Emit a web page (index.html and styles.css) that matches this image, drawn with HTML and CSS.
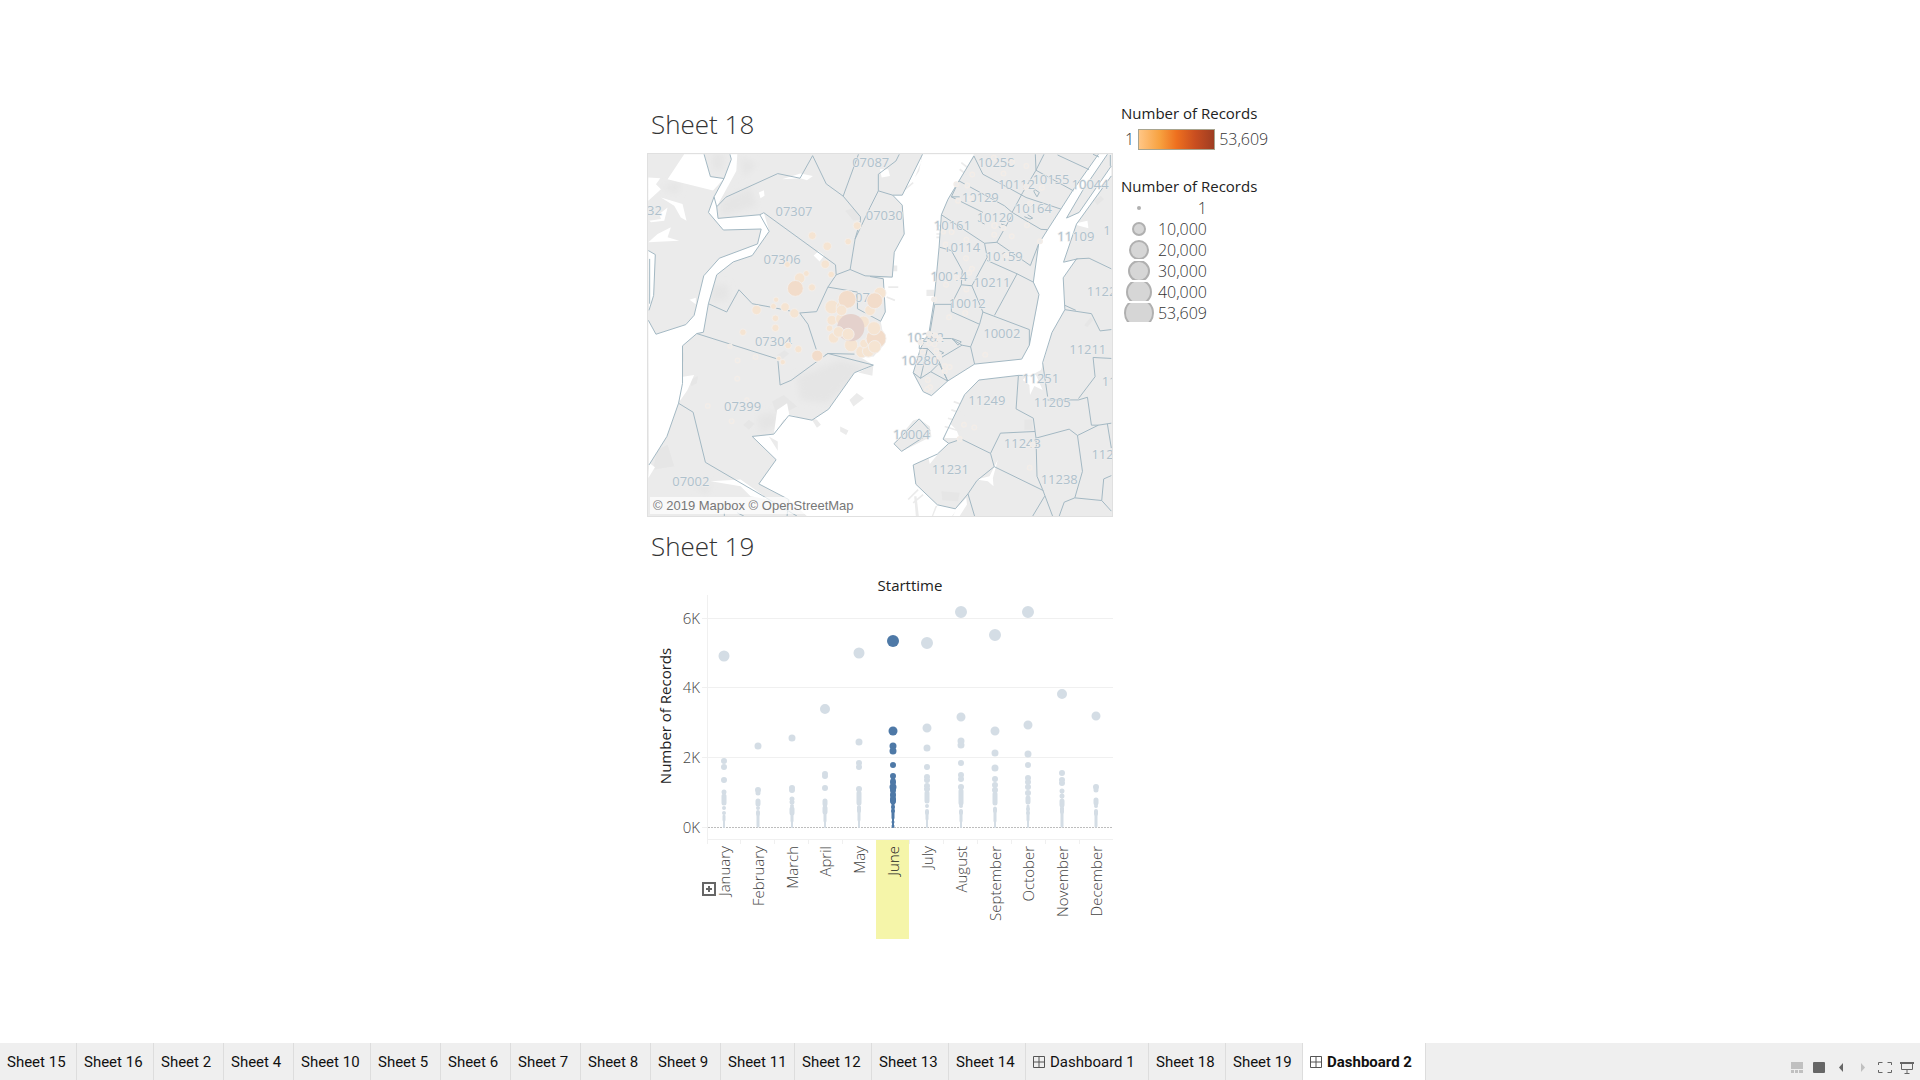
FILE: index.html
```html
<!DOCTYPE html>
<html lang="en">
<head>
<meta charset="utf-8">
<title>Dashboard 2</title>
<link rel="stylesheet" href="styles.css">
</head>
<body>
<main class="dashboard">
  <div class="sheets">
    <section>
      <h2 class="sheet-title">Sheet 18</h2>
      <div class="map">
        <svg class="map-canvas" viewBox="21 189 1398 1092" role="img" aria-label="Map of records by postal code">
          <defs>
            <filter id="soft" x="-20%" y="-20%" width="140%" height="140%"><feGaussianBlur stdDeviation="9"/></filter>
          </defs>
          <rect class="land" x="21" y="189" width="1398" height="1092"/>
          <!-- urban shading -->
          <g class="shade" filter="url(#soft)">
            <path d="M215 190L250 190 245 240 215 235ZM240 330L330 290 350 345 240 378ZM300 200L350 220 310 260ZM470 860L600 810 680 830 560 940 480 930ZM350 980L400 965 430 1000 360 1030ZM205 590L260 580 265 625 215 635ZM160 1190L210 1180 200 1215ZM60 290L120 270 110 310Z"/>
          </g>
          <g class="block">
            <path d="M145 870L172 858 168 880 152 888ZM118 792L128 788 128 815 118 812ZM50 1080L80 1065 100 1130 35 1140ZM308 1005L325 990 342 1002 325 1020ZM410 795L432 780 446 790 425 808ZM395 935L430 915 470 950 410 980ZM905 1205L960 1210 955 1235 908 1232ZM1335 705L1355 680 1362 690 1345 710ZM1155 990L1180 988 1180 1020 1155 1020ZM615 360L640 352 665 385 640 390ZM1365 330L1385 315 1395 325 1375 343Z"/>
          </g>
          <!-- rivers and harbour -->
          <path class="water" d="M22 690L45 732 135 703 160 675 189 556 236 503 351 460 362 415 248 418 203 365 220 318 250 263 272 205 268 190 290 190 287 240 228 348 232 383 358 372 370 366 386 422 335 495 278 514 228 553 203 640 188 726 168 730 125 767 125 880 113 940 78 1040 24 1126ZM130 190L190 190 209 257 250 263 217 299 80 265ZM22 480L43 492 38 615 24 660ZM126 860L160 855 140 900 116 935ZM25 1120L42 1133 22 1165Z"/>
          <path class="water" d="M848 190L787 313 758 313 787 343 793 430 763 485 757 560 730 562 736 665 722 693 735 760 700 800 643 790 700 825 643 848 565 958 515 991 445 977 400 1033 335 1040 407 1110 355 1183 445 1230 500 1280 937 1280 970 1235 947 1258 893 1246 828 1184 820 1126 893 1093 927 1061 910 1048 975 914 1018 870 1137 856 1175 856 1205 840 1212 818 1238 727 1277 658 1276 630 1272 562 1312 505 1273 515 1312 400 1417 255 1417 190 1378 190 1300 300 1265 355 1225 417 1198 460 1182 575 1199 612 1195 640 1170 765 1147 807 1005 822 924 873 875 917 850 905 820 848 842 775 868 725 883 630 898 470 905 372 925 325 958 270 1003 190Z"/>
          <path class="land" d="M1282 382L1330 300 1405 190 1417 190 1417 225 1320 365ZM762 1062L820 992 838 987 870 1010 875 1040 785 1085ZM628 930L650 909 672 925 640 950ZM600 1010L625 1022 618 1036 600 1025ZM512 985L530 990 542 1005 530 1014ZM700 825L697 857 655 847ZM860 598L883 598 883 617 860 617ZM825 260L845 210 838 190 848 190 838 240ZM760 525L772 525 772 542 760 542ZM823 1220L830 1220 837 1280 828 1280ZM887 1250L893 1248 880 1280 876 1280ZM385 1040L412 1055 412 1083Z"/>
          <!-- docks and rail yards -->
          <path class="water" d="M22 260L58 262 45 280 60 295 22 330ZM60 320L125 340 137 390 120 380 100 345ZM22 455L50 430 90 410 80 440 115 450ZM25 390L60 385 55 370 80 350 70 390 30 395ZM425 265L480 248 518 255 500 268 480 262ZM520 495L535 482 552 495 538 513ZM355 305L370 298 372 315 360 322ZM410 960L440 940 447 975 470 980 430 990 400 1033ZM210 1175L300 1170 385 1230 330 1220 300 1190ZM146 628L165 622 165 642ZM1160 860L1190 855 1210 900 1185 888 1172 915 1170 885 1150 870ZM1010 1170L1050 1160 1075 1110 1060 1165 1062 1190 1045 1175ZM950 1258L980 1225 982 1245 960 1280 940 1280ZM1345 390L1300 400 1348 413ZM865 1100L920 1062 870 1123ZM930 1000L950 1020 960 1045 915 1045ZM720 235L745 235 750 255 725 260Z"/>
          <path class="pier" d="M965 215L990 235M960 235L980 250M890 405h18M890 418h18M890 430h18M890 440h18M790 300l30 -25M745 590l30 0M740 620l25 10M835 1200l-30 30M850 1215l-30 25M915 1010l50 15M925 985l50 15M935 960l45 15M942 935l40 15"/>
          <!-- postal boundaries -->
          <path class="border" d="M190 190L209 257 250 263M268 190L272 205 250 263 220 318 203 365 248 418 362 415 351 460 236 503 189 556 160 675 135 703 45 732 22 690M220 318L228 348 232 383 358 372 386 422 335 495 278 514 228 553 203 640 188 726 168 730 125 767 125 880 113 940 78 1040 24 1126M22 480L43 492 38 615 24 660M26 505V640"/>
          <path class="border" d="M228 348L256 319 412 248 479 262 517 194 558 279 609 316 661 378V390L645 445 630 537 588 553 586 523 370 366 358 372M655 190L609 316M778 190L768 210 715 250V300L758 313H787L848 190M715 300L690 350 645 445M758 313L787 343 793 430 763 485 757 560 675 556 630 537M588 553L563 590 529 664 478 668M563 590L652 605 652 655 722 693 736 665 730 565 690 558M203 640L258 665 295 598 335 640 400 652 478 668 503 702 528 778M168 730L412 807 419 885 452 871 563 790 643 792M555 795L563 790 700 825 643 848 565 958 515 991 445 977 400 1033 335 1040 407 1110 355 1183 445 1230 440 1280M113 940L157 967 194 1118 365 1218 470 1280M251 1270V1280M290 1270L310 1280"/>
          <path class="border" d="M1003 195L958 270 925 325 905 372 898 470 883 630 868 725 842 775 820 848 850 905 875 917 924 873 1005 822 1147 807 1170 765 1199 612 1182 575 1198 460 1225 417 1265 355 1300 300 1378 190M1003 195L1030 250 1120 298 1160 320 1265 355M958 270L1095 345 1118 365 1205 416 1225 417M1118 365L1150 305 1190 238 1188 190M1190 238L1214 190M1190 238L1303 300M1255 192L1350 236M1362 190L1380 198M935 318L1030 365M958 270L935 318H960M1120 370L1072 455 1035 458 905 372M1072 455L1173 525 1198 460M1035 458L1043 500 997 586 965 583 935 642H885L870 730M900 470L935 480 968 540 965 583M1043 510L1133 550 1182 575M1133 550L1065 675M997 586L1030 665 1020 702 935 664V642M1030 665L1170 718 1170 765M1020 702L993 770 1005 822M993 770L967 765 895 808 924 873 873 845 842 865 820 848M967 765L935 745H840L838 775H863L895 808M842 865L863 775M873 845L898 820 924 873M938 745L955 765 965 755ZM1185 295L1200 305 1193 318 1184 303ZM1165 372L1180 382 1172 385 1155 378M1085 400L1100 405 1090 415 1078 408M1015 390L1035 400M895 780L912 788 905 792"/>
          <path class="border" d="M1137 856L1018 870 975 914 910 1048 927 1061 965 1048 1053 1091 1083 1030 1187 1025M1137 856L1130 957 1182 985 1190 1045 1290 1018 1315 1037 1378 1006 1417 1000M1137 856H1165M1315 1037L1330 1145 1307 1225 1388 1233 1417 1265M1388 1233L1394 1168 1417 1158M1307 1225L1275 1238 1260 1280M1405 1002L1417 1075M1225 930H1318L1345 922 1357 1006H1378M1318 926L1368 860 1362 802 1417 805M1225 920L1210 818 1238 727 1277 658 1357 670 1383 722 1417 718M1277 645L1310 660M1277 658L1272 562 1312 505 1350 503 1417 535M1273 515L1315 505M1273 515L1312 400 1417 255M1190 1045L1193 1160 1210 1200 1240 1280M1053 1091L1064 1131 1212 1203M1216 1220L1180 1280M1064 1131L1012 1173 985 1213 1005 1280M985 1213L947 1258 893 1246 828 1184 820 1126 893 1093 927 1061M1282 382L1330 300 1405 190M1282 382L1320 365 1417 225M1414 192V225M838 987L870 1022M838 987L762 1062 785 1085 870 1030"/>
          <g class="zip">
            <text x="18" y="374">32</text>
            <text x="645" y="634">07</text>
            <text x="1393" y="432">11</text>
            <text x="1343" y="616">1122</text>
            <text x="1388" y="889">11</text>
            <text x="1357" y="1109">1121</text>
          </g>
          <g class="zip zip-mid">
            <text x="692" y="229">07087</text><text x="461" y="375">07307</text><text x="425" y="521">07306</text><text x="733" y="388">07030</text>
            <text x="399" y="767">07304</text><text x="306" y="963">07399</text><text x="150" y="1188">07002</text>
            <text x="1070" y="227">10258</text><text x="1131" y="293">10112</text><text x="1235" y="279">10155</text><text x="1353" y="293">10044</text>
            <text x="1022" y="335">10129</text><text x="1182" y="368">10164</text><text x="1067" y="394">10120</text><text x="938" y="419">10161</text>
            <text x="966" y="484">10114</text><text x="1310" y="452">11109</text><text x="1094" y="510">10159</text><text x="928" y="572">10014</text>
            <text x="1057" y="590">10211</text><text x="983" y="654">10012</text><text x="1087" y="743">10002</text><text x="857" y="756">10282</text>
            <text x="840" y="826">10280</text><text x="1346" y="791">11211</text><text x="1204" y="879">11251</text><text x="1042" y="944">11249</text>
            <text x="1239" y="950">11205</text><text x="815" y="1047">10004</text><text x="1149" y="1075">11243</text><text x="932" y="1154">11231</text><text x="1260" y="1182">11238</text>
          </g>
          <!-- stations -->
          <g class="faint">
            <circle cx="998" cy="251" r="7"/><circle cx="950" cy="280" r="7"/><circle cx="983" cy="284" r="7"/><circle cx="955" cy="330" r="7"/><circle cx="992" cy="322" r="7"/><circle cx="1092" cy="248" r="7"/><circle cx="1118" cy="214" r="7"/><circle cx="1161" cy="225" r="7"/><circle cx="1063" cy="200" r="7"/><circle cx="1208" cy="291" r="7"/><circle cx="1160" cy="288" r="7"/><circle cx="1172" cy="339" r="7"/><circle cx="1163" cy="404" r="7"/><circle cx="1065" cy="405" r="8"/><circle cx="1092" cy="412" r="7"/><circle cx="1064" cy="432" r="7"/><circle cx="1117" cy="437" r="7"/><circle cx="936" cy="424" r="7"/><circle cx="980" cy="447" r="7"/><circle cx="918" cy="462" r="7"/><circle cx="979" cy="503" r="7"/><circle cx="997" cy="535" r="7"/><circle cx="989" cy="547" r="7"/><circle cx="950" cy="560" r="7"/><circle cx="919" cy="583" r="7"/><circle cx="980" cy="597" r="7"/><circle cx="1100" cy="495" r="7"/><circle cx="883" cy="627" r="7"/><circle cx="977" cy="668" r="7"/><circle cx="928" cy="681" r="7"/><circle cx="1037" cy="794" r="7"/><circle cx="1202" cy="452" r="7"/><circle cx="911" cy="424" r="6"/>
            <circle cx="842" cy="757" r="7"/><circle cx="868" cy="731" r="7"/><circle cx="886" cy="736" r="7"/><circle cx="900" cy="747" r="7"/><circle cx="868" cy="760" r="7"/><circle cx="884" cy="762" r="7"/><circle cx="890" cy="782" r="7"/><circle cx="898" cy="800" r="7"/><circle cx="848" cy="785" r="7"/><circle cx="915" cy="828" r="7"/><circle cx="930" cy="831" r="7"/><circle cx="915" cy="843" r="7"/><circle cx="864" cy="870" r="7"/><circle cx="871" cy="892" r="7"/><circle cx="862" cy="898" r="7"/><circle cx="973" cy="1005" r="7"/><circle cx="1004" cy="1013" r="7"/><circle cx="960" cy="1048" r="7"/><circle cx="1171" cy="1134" r="7"/><circle cx="1180" cy="1065" r="7"/>
            <circle cx="268" cy="768" r="6"/><circle cx="291" cy="811" r="7"/><circle cx="290" cy="866" r="7"/><circle cx="201" cy="948" r="7"/><circle cx="273" cy="994" r="7"/><circle cx="319" cy="930" r="6"/><circle cx="345" cy="801" r="7"/>
          </g>
          <g class="mark">
            <circle cx="516" cy="435" r="12"/><circle cx="561" cy="467" r="13"/><circle cx="555" cy="521" r="13"/><circle cx="624" cy="453" r="10"/><circle cx="651" cy="405" r="12"/><circle cx="573" cy="552" r="10"/><circle cx="441" cy="522" r="9"/><circle cx="478" cy="563" r="16"/><circle cx="498" cy="549" r="9"/><circle cx="515" cy="591" r="11"/><circle cx="407" cy="628" r="8"/><circle cx="399" cy="648" r="9"/><circle cx="434" cy="650" r="13"/><circle cx="348" cy="659" r="14"/><circle cx="462" cy="669" r="14"/><circle cx="405" cy="684" r="10"/><circle cx="405" cy="713" r="11"/><circle cx="307" cy="726" r="10"/><circle cx="443" cy="766" r="10"/><circle cx="474" cy="777" r="11"/><circle cx="415" cy="805" r="7"/><circle cx="427" cy="816" r="8"/>
            <circle cx="575" cy="650" r="21"/><circle cx="605" cy="650" r="17"/><circle cx="690" cy="660" r="16"/><circle cx="670" cy="695" r="18"/><circle cx="568" cy="714" r="10"/><circle cx="580" cy="743" r="16"/><circle cx="575" cy="690" r="15"/><circle cx="604" cy="686" r="18"/><circle cx="633" cy="765" r="20"/><circle cx="665" cy="785" r="18"/><circle cx="685" cy="783" r="18"/><circle cx="672" cy="760" r="13"/><circle cx="720" cy="608" r="18"/><circle cx="690" cy="748" r="14"/>
          </g>
          <g class="mark mark-mid">
            <circle cx="465" cy="594" r="24"/><circle cx="531" cy="797" r="17"/><circle cx="621" cy="627" r="27"/><circle cx="704" cy="631" r="24"/><circle cx="708" cy="745" r="30"/>
          </g>
          <circle class="hub" cx="632" cy="712" r="41"/>
          <g class="mark">
            <circle cx="702" cy="714" r="20"/><circle cx="704" cy="770" r="19"/><circle cx="604" cy="660" r="16"/><circle cx="595" cy="725" r="16"/><circle cx="624" cy="732" r="18"/>
          </g>
        </svg>
        <p class="credit"><a href="#mapbox">© 2019 Mapbox</a> <a href="#osm">© OpenStreetMap</a></p>
      </div>
    </section>

    <section>
      <h2 class="sheet-title sheet-title-second">Sheet 19</h2>
      <div class="chart">
        <svg class="chart-canvas" viewBox="647 571 466 374" role="img" aria-label="Number of records by start month">
          <rect class="picked" x="876" y="840" width="33" height="99"/>
          <path class="grid" d="M702 618.500H1113M702 687.500H1113M702 757.500H1113M702 827.500H707M707.500 595V844M707 839.500H1113M740.500 840V844M774.500 840V844M808.500 840V844M842.500 840V844M909.500 840V844M943.500 840V844M977.500 840V844M1011.500 840V844M1045.500 840V844M1079.500 840V844"/>
          <path class="zero" d="M708 827.500H1113"/>
          <g class="dots">
            <path class="d12" d="M927 643h0M961 612h0M995 635h0M1028 612h0"/>
            <path class="d11" d="M724 656h0M859 653h0"/>
            <path class="d10" d="M825 709h0M1062 694h0"/>
            <path class="d9" d="M927 728h0M961 717h0M995 731h0M1028 725h0M1096 716h0"/>
            <path class="d7" d="M758 746h0M792 738h0M859 742h0M927 748h0M961 741h0M961 745h0M995 753h0M1028 754h0M995 768h0"/>
            <path class="d6" d="M724 761h0M724 767h0M724 780h0M758 790h0M792 788h0M792 790h0M825 774h0M825 776h0M825 788h0M859 763h0M859 767h0M859 789h0M927 767h0M927 777h0M927 780h0M927 786h0M927 789h0M961 763h0M961 775h0M961 779h0M961 787h0M995 779h0M995 785h0M995 790h0M1028 765h0M1028 778h0M1028 782h0M1028 787h0M1028 793h0M1062 773h0M1062 780h0M1062 783h0M1096 787h0"/>
            <path class="d5" d="M724 792h0M724 796V803M758 793h0M758 801V804M792 799h0M792 802h0M792 809V813M825 801V804M825 808V812M859 793V803M927 793V801M961 791V803M995 794V803M1028 798V802M1062 791h0M1062 796h0M1062 801V805M1096 790h0M1096 800V803"/>
            <path class="d4" d="M724 808h0M724 813h0M758 808h0M758 812V814M792 806h0M825 806h0M859 807V811M927 806h0M927 811V813M961 806h0M961 811V813M995 809V811M1028 809h0M1028 813h0M1062 808V812M1096 806h0M1096 811V814"/>
            <path class="d3" d="M724 816V820M758 815V826M792 814V821M825 813V821M859 810V820M927 813V819M961 812V821M995 808V821M1028 806V820M1062 812V826M1096 814V826"/>
            <path class="d2" d="M724 820V827M792 820V827M825 820V827M859 820V827M927 820V827M961 820V827M995 820V827M1028 820V827"/>
          </g>
          <g class="dots dots-on">
            <path class="d12" d="M893 641h0"/>
            <path class="d9" d="M893 731h0"/>
            <path class="d7" d="M893 746h0M893 751h0M893 787h0"/>
            <path class="d6" d="M893 765h0M893 776h0M893 782h0M893 790h0M893 795h0M893 799V801"/>
            <path class="d5" d="M893 780V802"/>
            <path class="d4" d="M893 807h0M893 811h0"/>
            <path class="d3" d="M893 802V818M893 822h0M893 826h0"/>
            <path class="d2" d="M893 815V827"/>
          </g>
          <text class="axis-name axis-mid" x="910" y="591">Starttime</text>
          <text class="axis-name axis-mid" transform="translate(671 716) rotate(-90)">Number of Records</text>
          <g class="tick">
            <text x="700" y="624">6K</text><text x="700" y="693">4K</text><text x="700" y="763">2K</text><text x="700" y="833">0K</text>
            <text transform="translate(730 846) rotate(-90)">January</text>
            <text transform="translate(764 846) rotate(-90)">February</text>
            <text transform="translate(798 846) rotate(-90)">March</text>
            <text transform="translate(831 846) rotate(-90)">April</text>
            <text transform="translate(865 846) rotate(-90)">May</text>
            <text class="tick-on" transform="translate(899 846) rotate(-90)">June</text>
            <text transform="translate(933 846) rotate(-90)">July</text>
            <text transform="translate(967 846) rotate(-90)">August</text>
            <text transform="translate(1001 846) rotate(-90)">September</text>
            <text transform="translate(1034 846) rotate(-90)">October</text>
            <text transform="translate(1068 846) rotate(-90)">November</text>
            <text transform="translate(1102 846) rotate(-90)">December</text>
          </g>
        </svg>
        <button class="expand" type="button" aria-label="Expand Starttime"><svg width="14" height="14" viewBox="0 0 14 14"><path d="M1 1H13V13H1ZM4 7H10M7 4V10"/></svg></button>
      </div>
    </section>
  </div>

  <aside class="legends">
    <section>
      <h3 class="legend-title">Number of Records</h3>
      <div class="ramp"><span>1</span><span class="ramp-bar"></span><span>53,609</span></div>
    </section>
    <section class="sizes">
      <h3 class="legend-title">Number of Records</h3>
      <ul class="size-list">
        <li><svg viewBox="0 0 32 19"><circle class="speck" cx="16" cy="10" r="2"/></svg><span>1</span></li>
        <li><svg viewBox="0 0 32 19"><circle cx="16" cy="10" r="6"/></svg><span>10,000</span></li>
        <li><svg viewBox="0 0 32 19"><circle cx="16" cy="10" r="9"/></svg><span>20,000</span></li>
        <li><svg viewBox="0 0 32 19"><circle cx="16" cy="10" r="10"/></svg><span>30,000</span></li>
        <li><svg viewBox="0 0 32 19"><circle cx="16" cy="10" r="12"/></svg><span>40,000</span></li>
        <li><svg viewBox="0 0 32 19"><circle cx="16" cy="10" r="14"/></svg><span>53,609</span></li>
      </ul>
    </section>
  </aside>
</main>

<footer class="bar">
  <nav class="tabs" aria-label="Sheets">
    <button type="button">Sheet 15</button>
    <button type="button">Sheet 16</button>
    <button type="button" class="short">Sheet 2</button>
    <button type="button" class="short">Sheet 4</button>
    <button type="button">Sheet 10</button>
    <button type="button" class="short">Sheet 5</button>
    <button type="button" class="short">Sheet 6</button>
    <button type="button" class="short">Sheet 7</button>
    <button type="button" class="short">Sheet 8</button>
    <button type="button" class="short">Sheet 9</button>
    <button type="button" class="medium">Sheet 11</button>
    <button type="button">Sheet 12</button>
    <button type="button">Sheet 13</button>
    <button type="button">Sheet 14</button>
    <button type="button" class="wide"><svg class="pane" viewBox="0 0 12 12"><path d="M.5 .5H11.500V11.500H.5ZM.5 6H11.500M6 .5V11.500"/></svg>Dashboard 1</button>
    <button type="button">Sheet 18</button>
    <button type="button">Sheet 19</button>
    <button type="button" class="wide current" aria-current="page"><svg class="pane" viewBox="0 0 12 12"><path d="M.5 .5H11.500V11.500H.5ZM.5 6H11.500M6 .5V11.500"/></svg>Dashboard 2</button>
  </nav>
  <div class="tools">
    <button type="button" class="off" aria-label="Show filmstrip"><svg viewBox="0 0 14 12"><path d="M1 0H13V7H1ZM1 8H4V11H1ZM5 8H8V11H5ZM9 8H13V11H9Z"/></svg></button>
    <button type="button" aria-label="Show tabs"><svg viewBox="0 0 14 12"><rect x="1" width="12" height="11" rx="1"/></svg></button>
    <button type="button" aria-label="Previous"><svg viewBox="0 0 14 12"><path d="M9 1V10L5 5.500Z"/></svg></button>
    <button type="button" class="off" aria-label="Next"><svg viewBox="0 0 14 12"><path d="M5 1V10L9 5.500Z"/></svg></button>
    <button type="button" aria-label="Full screen"><svg viewBox="0 0 14 12"><path class="line" d="M.5 3V.5H4.500M9.500 .5H13.500V3M13.500 8V10.500H9.500M4.500 10.500H.5V8"/></svg></button>
    <button type="button" aria-label="Presentation mode"><svg viewBox="0 0 14 12"><path d="M0 0H14V2H0Z"/><path class="line" d="M1.500 1V7.500H12.500V1M7 8V11M4.500 11.500H9.500"/></svg></button>
  </div>
</footer>
</body>
</html>
```
FILE: styles.css
```css
* { box-sizing: border-box; }

body {
  margin: 0;
  min-height: 100vh;
  display: flex;
  flex-direction: column;
  background: #fff;
  color: #333;
  font-family: "Open Sans", "Noto Sans", sans-serif;
  font-size: 15px;
}

h2, h3, p, ul { margin: 0; padding: 0; font-weight: 400; }
button { border: 0; padding: 0; background: none; font: inherit; color: inherit; }
svg { display: block; }

.dashboard {
  flex: 1;
  display: grid;
  grid-template-columns: minmax(0, 466px) minmax(0, 1fr);
  column-gap: 8px;
  align-content: start;
  width: 100%;
  max-width: 640px;
  margin: 0 auto;
  padding: 103px 7px 0;
}

.sheet-title {
  padding-left: 4px;
  margin-bottom: 8px;
  font-size: 26px;
  font-weight: 300;
  line-height: 42px;
}
.sheet-title-second { margin-top: 8px; margin-bottom: 4px; }

/* Map */
.map { position: relative; border: 1px solid #e0e0e0; }
.map-canvas { width: 100%; }
.land { fill: #ebebeb; }
.water { fill: #fff; }
.shade { fill: #e5e5e5; }
.block { fill: #e6e6e6; }
.pier { fill: none; stroke: #ebebeb; stroke-width: 5; }
.border { fill: none; stroke: #a2b7c3; stroke-width: 3; }
.zip {
  font-size: 39px;
  fill: #afc1cc;
  stroke: #eeeeee;
  stroke-width: 4px;
  paint-order: stroke;
}
.zip-mid { text-anchor: middle; }
.faint { fill: #ececec; stroke: #f3ede8; stroke-width: 4px; }
.mark { fill: #f5e4d2; stroke: #f3eeea; stroke-width: 3px; }
.mark-mid { fill: #f2dcca; }
.hub { fill: #e4d1cc; }
.credit {
  position: absolute;
  left: 2px;
  bottom: 2px;
  padding: 0 3px;
  background: rgba(255, 255, 255, 0.7);
  font-family: "Liberation Sans", Arial, sans-serif;
  font-size: 13px;
  line-height: 17px;
}
.credit a { color: #777; text-decoration: none; }

/* Month chart */
.chart { position: relative; }
.chart-canvas { width: 100%; }
.picked { fill: #f5f5a9; }
.grid { fill: none; stroke: #f0f0f0; }
.zero { stroke: #bdbdbd; stroke-dasharray: 2 1; }
.dots { fill: none; stroke: #d4dde5; stroke-linecap: round; }
.dots-on { stroke: #4e79a7; }
.d12 { stroke-width: 12px; }
.d11 { stroke-width: 11px; }
.d10 { stroke-width: 10px; }
.d9 { stroke-width: 9px; }
.d7 { stroke-width: 7px; }
.d6 { stroke-width: 6px; }
.d5 { stroke-width: 5px; }
.d4 { stroke-width: 4px; }
.d3 { stroke-width: 3px; }
.d2 { stroke-width: 2px; }
.axis-name { font-size: 15px; fill: #222; }
.axis-mid { text-anchor: middle; }
.tick { font-size: 15px; font-weight: 300; fill: #444; text-anchor: end; }
.tick-on { fill: #222; }
.expand { position: absolute; left: 55px; top: 311px; }
.expand path { fill: #fff; stroke: #666; stroke-width: 2px; }

/* Legends */
.legend-title { font-size: 15px; line-height: 20px; color: #222; }
.ramp {
  display: flex;
  align-items: center;
  gap: 4px;
  margin-top: 5px;
  padding-left: 4px;
  line-height: 22px;
  font-size: 16px;
  font-weight: 300;
}
.ramp-bar {
  width: 77px;
  height: 21px;
  border: 1px solid #a8a48f;
  background: linear-gradient(90deg, #ffc685, #f7a13f 28%, #ee701f 50%, #c94e20 75%, #9e3d22);
}
.sizes { margin-top: 26px; }
.size-list { list-style: none; padding-top: 1px; font-size: 16px; font-weight: 300; }
.size-list li {
  display: flex;
  justify-content: space-between;
  align-items: center;
  width: 86px;
  height: 21px;
}
.size-list svg { width: 32px; height: 19px; margin-left: 2px; flex: none; }
.size-list circle { fill: #d6d6d6; stroke: #b0b0b0; stroke-width: 2px; }
.size-list .speck { fill: #b0b0b0; stroke: none; }

/* Sheet tabs */
.bar {
  display: flex;
  justify-content: space-between;
  height: 37px;
  background: #efefef;
  font-family: "Roboto", "Liberation Sans", sans-serif;
  font-size: 15px;
  color: #111;
}
.tabs { display: flex; }
.tabs button {
  display: flex;
  align-items: center;
  gap: 5px;
  width: 77px;
  padding-left: 7px;
  border-right: 1px solid #ddd;
  white-space: nowrap;
}
.tabs .short { width: 70px; }
.tabs .medium { width: 74px; }
.tabs .wide { width: 123px; }
.tabs .current { background: #fff; font-weight: 700; }
.pane { width: 12px; height: 12px; fill: none; stroke: #555; }
.tools { display: flex; align-items: flex-end; padding: 0 2px 1px 0; }
.tools button { display: grid; place-items: center; width: 22px; height: 22px; }
.tools svg { width: 14px; height: 12px; fill: #666; }
.tools .off svg { fill: #c0c0c0; }
.tools .line { fill: none; stroke: #666; }
```
